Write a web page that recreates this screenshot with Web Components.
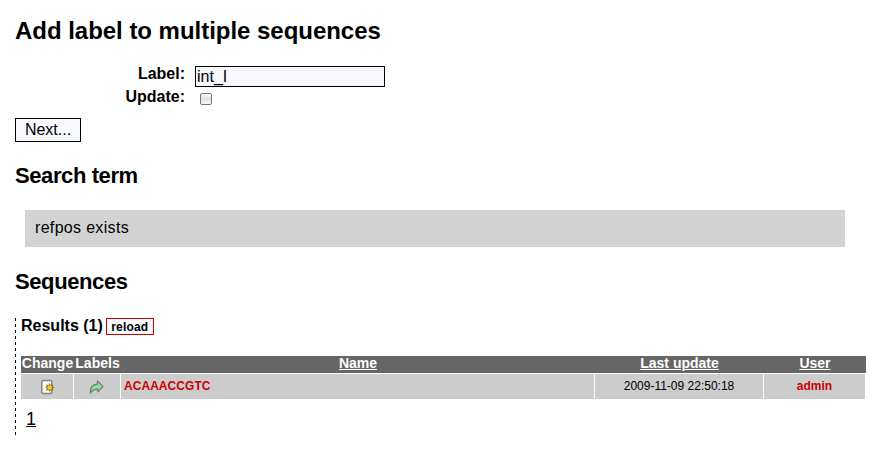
<!DOCTYPE html>
<html lang="en">
<head>
<meta charset="utf-8">
<title>Add label to multiple sequences</title>
<style>
body { margin: 0; background: #fff; color: #000; font-family: "Liberation Sans", Arial, sans-serif; font-size: 16px; }
</style>
</head>
<body>
<label-page>
  <page-heading level="1" style="--gap:21px">Add label to multiple sequences</page-heading>
  <label-form></label-form>
  <page-heading level="2" style="--gap:21px">Search term</page-heading>
  <search-term>refpos exists</search-term>
  <page-heading level="2" style="--gap:23px">Sequences</page-heading>
  <result-panel>
    <sequence-table></sequence-table>
  </result-panel>
</label-page>
<script>
const define = (name, html) => customElements.define(name, class extends HTMLElement {
  constructor() {
    super();
    const t = document.createElement('template');
    t.innerHTML = html;
    this.attachShadow({ mode: 'open' }).append(t.content.cloneNode(true));
  }
});

define('label-page', `
<style>:host { display: flex; flex-direction: column; padding: 17px 18px 0 15px; height: 435px; box-sizing: border-box; }</style>
<slot></slot>`);

define('page-heading', `
<style>
:host { display: block; font-weight: bold; white-space: nowrap; margin-bottom: var(--gap); }
:host([level="1"]) { font-size: 24px; line-height: 28px; letter-spacing: -0.03px; }
:host([level="2"]) { font-size: 22px; line-height: 26px; letter-spacing: -0.4px; }
</style>
<slot></slot>`);

define('label-form', `
<style>
:host { display: block; margin-bottom: 21px; }
.grid { display: grid; grid-template-columns: 170px 190px; grid-template-rows: 21px 23px; column-gap: 10px; }
label { font-weight: bold; line-height: 18px; text-align: right; margin-top: -1px; }
.u { margin-top: 1px; }
input[type=text] { box-sizing: border-box; width: 190px; height: 21px; margin: 0; padding: 0 1px; border: 1px solid #000; border-radius: 0; background: #f8f8ff; color: #000; font: 16px "Liberation Sans", Arial, sans-serif; outline: 0; }
input[type=checkbox] { appearance: none; box-sizing: border-box; width: 12px; height: 12px; margin: 6px 0 0 5px; border: 1px solid #777; border-radius: 2px; background: linear-gradient(#fff, #e2e2e2 45%, #f6f6f6); }
button { display: block; box-sizing: border-box; width: 66px; height: 24px; margin-top: 8px; padding: 0; border: 1px solid #000; border-radius: 0; background: #f8f8ff; color: #000; font: 16px/22px "Liberation Sans", Arial, sans-serif; }
</style>
<div class="grid">
  <label for="l">Label:</label><input id="l" type="text" value="int_I">
  <label class="u" for="u">Update:</label><input id="u" type="checkbox">
</div>
<button>Next...</button>`);

define('search-term', `
<style>:host { display: block; margin: 0 21px 22px 10px; padding: 9px 10px 10px; line-height: 18px; letter-spacing: .32px; background: #d3d3d3; }</style>
<slot></slot>`);

define('result-panel', `
<style>
:host { display: flex; flex-direction: column; height: 117px; box-sizing: border-box; padding-left: 6px;
  background: repeating-linear-gradient(#000 0 3px, transparent 3px 6px) left top / 1px 100% no-repeat; }
header { display: flex; align-items: flex-start; gap: 3px; height: 38px; font-weight: bold; }
.t { line-height: 18px; margin-top: -1px; white-space: nowrap; }
a { box-sizing: border-box; width: 48px; height: 17px; border: 1px solid #c00; background: #f8f8ff; font-size: 12px; line-height: 16px; letter-spacing: .2px; text-align: center; }
.pages { margin: 10px 0 0 5px; font-size: 18px; line-height: 20px; }
.pages u { text-underline-offset: 1px; text-decoration-thickness: 1px; }
</style>
<header><span class="t">Results (1)</span><a>reload</a></header>
<slot></slot>
<div class="pages"><u>1</u></div>`);

define('icon-edit', `
<style>:host { display: block; width: 16px; height: 16px; } svg { display: block; }</style>
<svg width="16" height="16" viewBox="0 0 16 16">
<rect x="2.8" y="1.6" width="10" height="12.8" rx="1.5" fill="#fafafa" stroke="#85857a" stroke-width="1.5"/>
<path d="M10.7 4 11.8 6.2 14.3 5.5 13.6 7.6 15.6 8.5 13.6 9.6 14.3 11.7 11.8 11 10.7 13 9.5 11 7.1 11.7 7.8 9.5 6.2 8.5 7.8 7.5 7.1 5.4 9.5 6.2Z" fill="#8f731c"/>
<circle cx="10.7" cy="8.5" r="2.3" fill="#ffcb26"/>
</svg>`);

define('icon-forward', `
<style>:host { display: block; width: 16px; height: 16px; } svg { display: block; }</style>
<svg width="16" height="16" viewBox="0 0 16 16">
<path d="M8.3 2 14 7.4 8.8 12.8V10.2C6.2 10 4.2 10.9 1.4 13.8 1.2 8.8 3.4 5.5 8.3 5.2Z" fill="#91d9a5" stroke="#66816c" stroke-width="1.2" stroke-linejoin="round"/>
</svg>`);

define('sequence-table', `
<style>
:host { display: block; width: 845px; }
.row { display: grid; grid-template-columns: 53px 47px 474px 169px 102px; }
.head { height: 17px; background: #666; color: #fff; font-size: 14px; font-weight: bold; line-height: 15px; text-align: center; white-space: nowrap; }
.head u { text-underline-offset: 1px; text-decoration-thickness: 1px; }
.body { margin-top: 1px; height: 25px; font-size: 12px; line-height: 24px; }
.body > div { background: #ccc; border-right: 1px solid #fff; display: flex; justify-content: center; }
.body > .name { justify-content: flex-start; padding-left: 3px; letter-spacing: .05px; }
.name, .user { color: #c00; font-weight: bold; }
icon-edit, icon-forward { margin-top: 5px; }
</style>
<div class="row head"><div>Change</div><div>Labels</div><div><u>Name</u></div><div><u>Last update</u></div><div><u>User</u></div></div>
<div class="row body"><div><icon-edit></icon-edit></div><div><icon-forward></icon-forward></div><div class="name">ACAAACCGTC</div><div class="date">2009-11-09 22:50:18</div><div class="user">admin</div></div>`);
</script>
</body>
</html>
